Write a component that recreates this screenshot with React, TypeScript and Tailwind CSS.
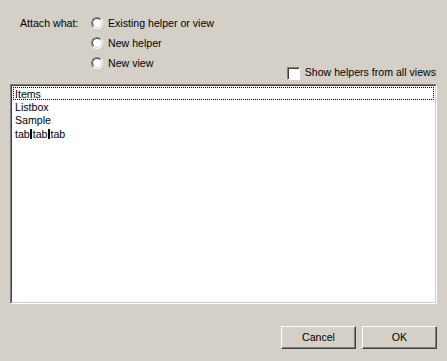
import React from "react";

function Radio() {
  return (
    <span className="relative inline-block w-[12px] h-[12px] shrink-0 rounded-full bg-white border border-t-[#808080] border-l-[#808080] border-r-white border-b-white">
      <span className="absolute inset-0 rounded-full border border-t-[#404040] border-l-[#404040] border-r-[#d4d0c8] border-b-[#d4d0c8]" />
    </span>
  );
}

function Bar() {
  return <span className="inline-block w-[2px] h-[10px] bg-black align-[-1px] mx-[0.5px]" />;
}

function Btn({ label }: { label: string }) {
  return (
    <button className="w-[75px] h-[23px] bg-[#d4d0c8] border border-t-white border-l-white border-r-[#404040] border-b-[#404040] shadow-[inset_-1px_-1px_0_#808080] text-black">
      {label}
    </button>
  );
}

export default function App() {
  return (
    <div
      className="w-[447px] h-[361px] bg-[#d4d0c8] text-[10.6px] text-black flex flex-col"
      style={{ fontFamily: '"Liberation Sans", Arial, sans-serif' }}
    >
      <div className="flex pt-[16px] pl-[20px]">
        <span className="w-[71px] leading-[14px]">Attach what:</span>
        <div className="flex flex-col gap-[6px]">
          {["Existing helper or view", "New helper", "New view"].map((t) => (
            <label key={t} className="flex items-center gap-[5px] leading-[14px]">
              <Radio />
              <span>{t}</span>
            </label>
          ))}
        </div>
      </div>
      <div className="flex justify-end items-center gap-[5px] pr-[11px] mt-[-4px] h-[14px]">
        <span className="w-[13px] h-[13px] bg-white border border-t-[#808080] border-l-[#808080] border-r-white border-b-white shadow-[inset_1px_1px_0_#404040]" />
        <span>Show helpers from all views</span>
      </div>
      <div className="mx-[10px] mt-[4px] h-[220px] bg-white border border-t-[#808080] border-l-[#808080] border-r-white border-b-white">
        <div className="h-full border border-t-[#404040] border-l-[#404040] border-r-[#d4d0c8] border-b-[#d4d0c8] pt-[1px] px-[1px]">
          <div className="h-[13px] leading-[12px] pl-[1px] border border-dotted border-black">Items</div>
          <div className="h-[13px] leading-[14px] pl-[2px]">Listbox</div>
          <div className="h-[13px] leading-[15px] pl-[2px]">Sample</div>
          <div className="h-[13px] leading-[16px] pl-[2px]">
            tab<Bar />tab<Bar />tab
          </div>
        </div>
      </div>
      <div className="flex justify-end gap-[6px] pr-[10px] mt-[22px]">
        <Btn label="Cancel" />
        <Btn label="OK" />
      </div>
    </div>
  );
}
